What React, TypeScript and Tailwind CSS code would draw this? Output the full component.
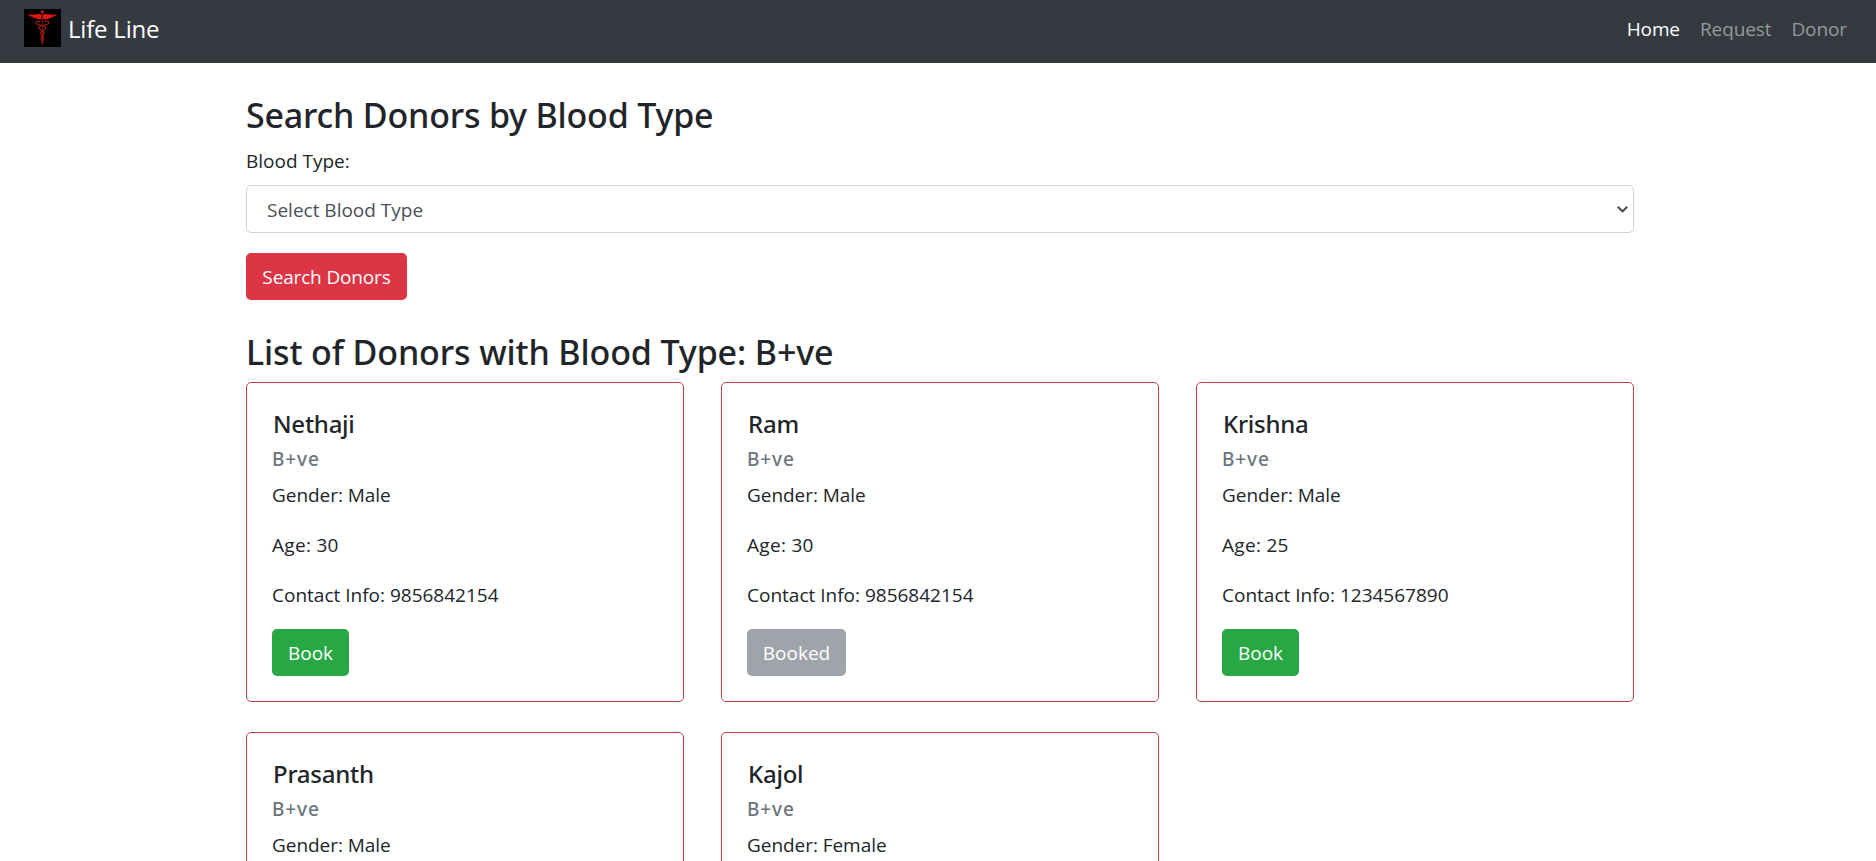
type Donor = {
  name: string;
  type: string;
  gender: string;
  age: number;
  contact: string;
  booked: boolean;
};

const donors: Donor[] = [
  { name: "Nethaji", type: "B+ve", gender: "Male", age: 30, contact: "9856842154", booked: false },
  { name: "Ram", type: "B+ve", gender: "Male", age: 30, contact: "9856842154", booked: true },
  { name: "Krishna", type: "B+ve", gender: "Male", age: 25, contact: "1234567890", booked: false },
  { name: "Prasanth", type: "B+ve", gender: "Male", age: 28, contact: "9856842154", booked: false },
  { name: "Kajol", type: "B+ve", gender: "Female", age: 26, contact: "9856842154", booked: false },
];

function Logo() {
  return (
    <svg className="h-[38px] w-[37px]" viewBox="0 0 111 114" aria-hidden="true">
      <rect width="111" height="114" fill="#000" />
      <g fill="#e01410">
        <circle cx="55" cy="8" r="4.5" />
        <path d="M53 18C45 10 34 20 12 16C16 22 21 23 27 24C27 27 32 28 36 28C38 31 47 32 53 29Z" />
        <path d="M57 18C65 10 76 20 99 16C95 22 90 23 84 24C84 27 79 28 75 28C73 31 64 32 57 29Z" />
      </g>
      <g fill="none" stroke="#a81815" strokeLinecap="round">
        <path d="M55 10V106" strokeWidth="2.5" />
        <path
          d="M47 37C35 34 33 41 38 45C46 50 67 48 65 57C63 66 49 65 50 74C51 82 60 81 59 89C58 95 54 96 55 101"
          strokeWidth="3.5"
        />
        <path
          d="M63 37C75 34 77 41 72 45C64 50 43 48 45 57C47 66 61 65 60 74C59 82 50 81 51 89C52 94 56 95 55 99"
          strokeWidth="3.5"
        />
      </g>
    </svg>
  );
}

function Navbar() {
  return (
    <nav className="flex h-[63px] items-start justify-between bg-[#343a40] pr-[29px] pl-6">
      <a href="#" className="flex pt-[9px] text-2xl leading-10 text-white">
        <Logo />
        <span className="ml-[7px] tracking-[-0.2px]">Life Line</span>
      </a>
      <div className="flex gap-5 pt-[14px] text-[19px] leading-[30px] tracking-[-0.1px]">
        <a href="#" className="text-white">Home</a>
        <a href="#" className="text-[#96999c]">Request</a>
        <a href="#" className="text-[#96999c]">Donor</a>
      </div>
    </nav>
  );
}

function DonorCard({ donor }: { donor: Donor }) {
  return (
    <article className="h-80 rounded-[5px] border border-[#bb3f4b] px-[25px] pt-[26px]">
      <h5 className="ml-px font-['Noto_Sans',sans-serif] text-2xl leading-[30px] font-medium tracking-[-0.25px]">
        {donor.name}
      </h5>
      <h6 className="mt-2 font-['Noto_Sans',sans-serif] text-[19px] leading-6 font-medium tracking-[0.9px] text-[#6c757d]">
        {donor.type}
      </h6>
      <div className="mt-[9px] flex flex-col gap-5">
        <p className="tracking-[-0.05px]">Gender: {donor.gender}</p>
        <p className="tracking-[0.3px]">Age: {donor.age}</p>
        <p>Contact Info: {donor.contact}</p>
      </div>
      {donor.booked ? (
        <button disabled className="mt-[19px] h-[47px] w-[99px] rounded-[5px] bg-[#9fa4aa] pt-px text-white">
          Booked
        </button>
      ) : (
        <button className="mt-[19px] h-[47px] w-[77px] rounded-[5px] bg-[#28a745] pt-px text-white">Book</button>
      )}
    </article>
  );
}

export default function App() {
  return (
    <div className="h-screen overflow-hidden bg-white font-['Open_Sans',sans-serif] text-[19px] leading-[30px] text-[#212529]">
      <Navbar />
      <main className="ml-[246px] w-[1388px] pt-[31px]">
        <h3 className="font-['Noto_Sans',sans-serif] text-[34px] leading-[42px] font-medium tracking-[-0.2px]">
          Search Donors by Blood Type
        </h3>
        <p className="mt-[10px]">Blood Type:</p>
        <div className="mt-[9px] flex h-12 items-center justify-between rounded-[5px] border border-[#ced4da] pt-px pr-[5px] pl-5 text-[#495057]">
          <span>Select Blood Type</span>
          <svg className="h-[7px] w-[11px]" viewBox="0 0 11 7" fill="none" stroke="#41464b" strokeWidth="2">
            <path d="M0.8 0.8L5.5 5.4L10.2 0.8" />
          </svg>
        </div>
        <button className="mt-5 block h-[47px] w-[161px] rounded-[5px] bg-[#dc3545] pt-px tracking-[-0.15px] text-white">
          Search Donors
        </button>
        <h3 className="mt-[31px] font-['Noto_Sans',sans-serif] text-[34px] leading-[42px] font-medium tracking-[-0.12px]">
          List of Donors with Blood Type: B+ve
        </h3>
        <section className="mt-[9px] grid grid-cols-[438px_438px_438px] gap-x-[37px] gap-y-[30px]">
          {donors.map((donor) => (
            <DonorCard key={donor.name} donor={donor} />
          ))}
        </section>
      </main>
    </div>
  );
}
